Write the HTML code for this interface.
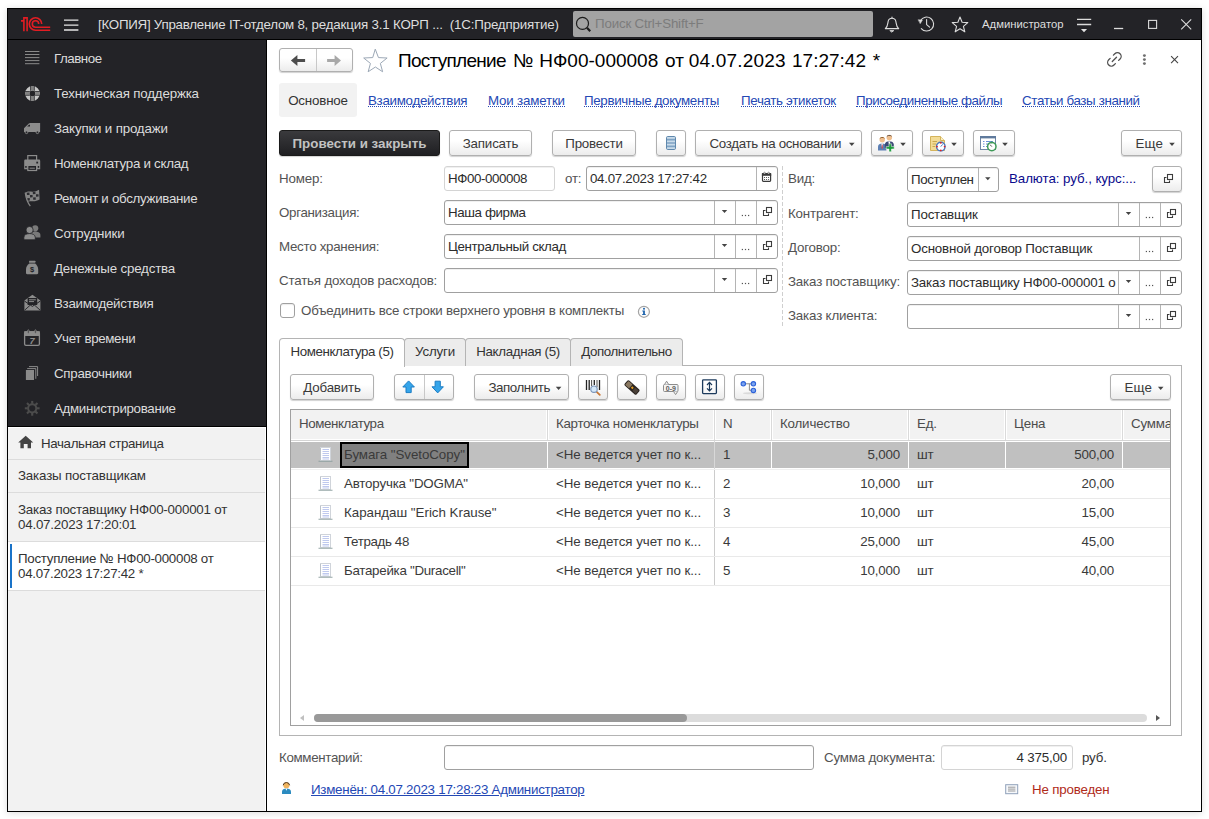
<!DOCTYPE html>
<html lang="ru">
<head>
<meta charset="utf-8">
<title>Поступление № НФ00-000008</title>
<style>
*{box-sizing:border-box;margin:0;padding:0}
html,body{width:1209px;height:819px;overflow:hidden;background:#fff}
body{font-family:"Liberation Sans",Arial,sans-serif;font-size:13.33px;letter-spacing:-.18px;color:#333;position:relative}
.abs{position:absolute}
#win{position:absolute;left:7px;top:8px;width:1195px;height:804px;border:1px solid #000;background:#fff;box-shadow:0 1px 7px rgba(0,0,0,.14)}
/* coordinates inside #win are page coords via #c wrapper */
#c{position:absolute;left:-8px;top:-9px;width:1209px;height:819px}
#tbar{position:absolute;left:8px;top:9px;width:1193px;height:31px;background:#232327;border-bottom:1px solid #000}
#tbar .t{position:absolute;top:0;line-height:31px;color:#dedede;white-space:nowrap;font-size:13.33px}
#search{position:absolute;left:573px;top:11px;width:300px;height:26px;background:#a3a3a3;border-radius:2px}
#search span{position:absolute;left:22px;top:0;line-height:26px;color:#7c7c7c;font-size:13.33px}
#side{position:absolute;left:8px;top:40px;width:259px;height:386px;background:#232327}
#side .i{position:absolute;left:46px;color:#dcdcdc;font-size:13.33px;line-height:16px;white-space:nowrap}
#open{position:absolute;left:8px;top:426px;width:259px;height:385px;background:#f2f2f2}
#open .r{position:absolute;left:0;width:259px;border-bottom:1px solid #dcdcdc;color:#333;padding-left:10px;line-height:15px}
.lbl{position:absolute;color:#535353;white-space:nowrap;line-height:16px}
.fld{position:absolute;height:25px;border:1px solid #a0a0a0;border-radius:3px;background:#fff;color:#2c2c2c;line-height:23px;padding-left:3px;white-space:nowrap;overflow:hidden;box-shadow:inset 0 1px 0 rgba(0,0,0,.06)}
.fld i{position:absolute;top:0;bottom:0;width:1px;background:#b4b4b4}
.btn{position:absolute;height:26px;border:1px solid #b0b0b0;border-radius:3px;background:linear-gradient(#fff 40%,#ececec);color:#3a3a3a;text-align:center;line-height:26px;white-space:nowrap;box-shadow:0 1px 1px rgba(0,0,0,.18)}
.lnk{position:absolute;color:#2448b4;white-space:nowrap;line-height:16px;border-bottom:1px dotted #2448b4;height:14px;margin-top:1px}
.btn.c{text-align:left;padding-left:13.5px}
.car{display:inline-block;width:0;height:0;border-left:2.8px solid transparent;border-right:2.8px solid transparent;border-top:3px solid #444;vertical-align:middle;margin-left:7px;position:relative;top:-1px}
.tab{position:absolute;top:338px;height:28px;border:1px solid #b4b4b4;border-bottom:none;background:#ececec;border-radius:4px 4px 0 0;line-height:25px;text-align:center;color:#333}
.th{position:absolute;height:29px;background:#f2f2f2;line-height:28px;color:#4c4c4c;white-space:nowrap;overflow:hidden}
.td{position:absolute;height:28px;line-height:28px;white-space:nowrap;color:#3a3a3a}
</style>
</head>
<body>
<div id="win"><div id="c">

<div id="tbar">
<svg class="abs" style="left:13px;top:8px" width="31" height="15" viewBox="0 0 31 15"><g fill="none" stroke="#e21d23" stroke-width="1.6"><path d="M2.9 14.2V.9H6.1V14.2M0 3.9H2.9"/><path d="M20.7 7A6.2 6.2 0 1 0 14.5 13.2H29.2"/><path d="M17.7 7A3.2 3.2 0 1 0 14.5 10.2H29.2"/></g></svg>
<svg class="abs" style="left:56px;top:10px" width="15" height="12" viewBox="0 0 15 12"><path d="M0 1.1H14.4M0 6.1H14.4M0 11H14.4" stroke="#e6e6e6" stroke-width="1.3"/></svg>
<span class="t" style="left:90px"><span style="letter-spacing:-0.25px">[КОПИЯ] Управление IT-отделом 8, </span>редакция 3.1 КОРП ...&nbsp;&nbsp;(1С:Предприятие)</span>
<span class="t" style="left:974px;font-size:11.3px;letter-spacing:0">Администратор</span>
</div>
<div id="search"><span>Поиск Ctrl+Shift+F</span></div>
<div id="side">
<span class="i" style="top:11px;letter-spacing:-0.48px">Главное</span>
<span class="i" style="top:46px">Техническая поддержка</span>
<span class="i" style="top:81px">Закупки и продажи</span>
<span class="i" style="top:116px;letter-spacing:-0.28px">Номенклатура и склад</span>
<span class="i" style="top:151px;letter-spacing:-0.30px">Ремонт и обслуживание</span>
<span class="i" style="top:186px">Сотрудники</span>
<span class="i" style="top:221px">Денежные средства</span>
<span class="i" style="top:256px;letter-spacing:-0.28px">Взаимодействия</span>
<span class="i" style="top:291px;letter-spacing:-0.35px">Учет времени</span>
<span class="i" style="top:326px;letter-spacing:-0.28px">Справочники</span>
<span class="i" style="top:361px;letter-spacing:-0.32px">Администрирование</span>
</div>
<div id="open">
<div class="r" style="top:0;height:34px;line-height:35px;padding-left:33px;letter-spacing:-0.36px">Начальная страница</div>
<div class="r" style="top:34px;height:33px;line-height:32px">Заказы поставщикам</div>
<div class="r" style="top:67px;height:49px;padding-top:9px;letter-spacing:-0.21px">Заказ поставщику НФ00-000001 от<br>04.07.2023 17:20:01</div>
<div class="r" style="top:116px;height:49px;padding-top:9px;background:#fff;letter-spacing:-0.28px">Поступление № НФ00-000008 от<br>04.07.2023 17:27:42 *<b class="abs" style="left:2px;top:2px;width:2px;height:44px;background:#1a73c8"></b></div>
</div>

<div class="abs" style="left:8px;top:426px;width:259px;height:1px;background:#000"></div>
<div class="abs" style="left:8px;top:427px;width:258px;height:1px;background:#fff"></div>
<div class="abs" style="left:265px;top:427px;width:1px;height:384px;background:#fff"></div>
<div class="abs" style="left:266px;top:40px;width:1px;height:771px;background:#000"></div>
<!-- header -->
<div class="btn" style="left:279px;top:48px;width:74px;height:24px"></div>
<div class="abs" style="left:316px;top:49px;width:1px;height:22px;background:#c8c8c8"></div>
<div class="abs" id="title" style="letter-spacing:0;left:0;top:49px;font-size:19px;line-height:24px;color:#000;white-space:nowrap"><span class="abs" style="left:398px;letter-spacing:-.72px">Поступление</span><span class="abs" style="left:513px">№</span><span class="abs" style="left:539.2px">НФ00-000008</span><span class="abs" style="left:665px">от</span><span class="abs" style="left:688.8px;letter-spacing:.18px">04.07.2023</span><span class="abs" style="left:792px">17:27:42</span><span class="abs" style="left:872.8px">*</span></div>

<div class="abs" style="left:279px;top:83px;width:78px;height:34px;background:#f2f2f2;border-radius:3px;line-height:36px;text-align:center;color:#333">Основное</div>
<span class="lnk" style="left:368px;top:92px;letter-spacing:-0.29px">Взаимодействия</span>
<span class="lnk" style="left:488px;top:92px">Мои заметки</span>
<span class="lnk" style="left:584px;top:92px;letter-spacing:-0.33px">Первичные документы</span>
<span class="lnk" style="left:741px;top:92px;letter-spacing:-0.32px">Печать этикеток</span>
<span class="lnk" style="left:856px;top:92px;letter-spacing:-0.41px">Присоединенные файлы</span>
<span class="lnk" style="left:1022px;top:92px;letter-spacing:-0.35px">Статьи базы знаний</span>

<!-- toolbar -->
<div class="btn" style="left:279px;top:130px;width:161px;background:linear-gradient(#3a3a3d,#1f1f22);border-color:#1a1a1a;color:#c2c2c2;font-weight:bold;font-size:13.33px;letter-spacing:0.02px">Провести и закрыть</div>
<div class="btn" style="left:449px;top:130px;width:83px">Записать</div>
<div class="btn" style="left:552px;top:130px;width:84px">Провести</div>
<div class="btn" style="left:656px;top:130px;width:30px"></div>
<div class="btn c" style="left:695px;top:130px;width:167px;letter-spacing:-0.33px">Создать на основании</div>
<div class="btn" style="left:871px;top:130px;width:42px"></div>
<div class="btn" style="left:922px;top:130px;width:42px"></div>
<div class="btn" style="left:973px;top:130px;width:42px"></div>
<div class="btn c" style="left:1121px;top:130px;width:61px;letter-spacing:0.12px">Еще</div>

<!-- form left -->
<span class="lbl" style="left:279px;top:171px">Номер:</span>
<div class="fld" style="left:444px;top:166px;width:111px;border-color:#d4d4d4;letter-spacing:-0.40px">НФ00-000008</div>
<span class="lbl" style="left:565px;top:171px">от:</span>
<div class="fld" style="left:586px;top:166px;width:192px;letter-spacing:-0.29px">04.07.2023 17:27:42<i style="left:169px"></i></div>
<span class="lbl" style="left:279px;top:205px;letter-spacing:-0.30px">Организация:</span>
<div class="fld" style="left:444px;top:200px;width:334px;letter-spacing:-0.38px">Наша фирма<i style="left:269px"></i><i style="left:290px"></i><i style="left:311px"></i></div>
<span class="lbl" style="left:279px;top:239px;letter-spacing:-0.28px">Место хранения:</span>
<div class="fld" style="left:444px;top:234px;width:334px;letter-spacing:-0.35px">Центральный склад<i style="left:269px"></i><i style="left:290px"></i><i style="left:311px"></i></div>
<span class="lbl" style="left:279px;top:273px">Статья доходов расходов:</span>
<div class="fld" style="left:444px;top:268px;width:334px"><i style="left:269px"></i><i style="left:290px"></i><i style="left:311px"></i></div>
<div class="abs" style="left:280px;top:303px;width:15px;height:15px;border:1px solid #a0a0a0;border-radius:3px;background:#fff;box-shadow:inset 0 1px 1px rgba(0,0,0,.08)"></div>
<span class="lbl" style="left:301px;top:303px">Объединить все строки верхнего уровня в комплекты</span>
<div class="abs" style="left:782px;top:166px;width:1px;height:162px;background:repeating-linear-gradient(to bottom,#cfcfcf 0,#cfcfcf 4px,transparent 4px,transparent 6px)"></div>

<!-- form right -->
<span class="lbl" style="left:788px;top:171px">Вид:</span>
<div class="fld" style="left:907px;top:167px;width:92px;letter-spacing:-0.42px">Поступлен<i style="left:70px"></i></div>
<span class="abs" style="left:1009px;top:171px;line-height:16px;color:#0a0a8c;white-space:nowrap;letter-spacing:-0.07px">Валюта: руб., курс:...</span>
<div class="btn" style="left:1152px;top:166px;width:30px"></div>
<span class="lbl" style="left:788px;top:206px">Контрагент:</span>
<div class="fld" style="left:907px;top:202px;width:275px">Поставщик<i style="left:210px"></i><i style="left:231px"></i><i style="left:252px"></i></div>
<span class="lbl" style="left:788px;top:240px">Договор:</span>
<div class="fld" style="left:907px;top:236px;width:275px">Основной договор Поставщик<i style="left:231px"></i><i style="left:252px"></i></div>
<span class="lbl" style="left:788px;top:274px">Заказ поставщику:</span>
<div class="fld" style="left:907px;top:270px;width:275px">Заказ поставщику НФ00-000001 о<i style="left:210px"></i><i style="left:231px"></i><i style="left:252px"></i></div>
<span class="lbl" style="left:788px;top:308px">Заказ клиента:</span>
<div class="fld" style="left:907px;top:304px;width:275px"><i style="left:210px"></i><i style="left:231px"></i><i style="left:252px"></i></div>

<!-- tabs -->
<div class="abs" style="left:279px;top:365px;width:903px;height:371px;border:1px solid #b4b4b4;background:#fff"></div>
<div class="tab" style="left:279px;width:126px;background:#fff;height:29px;letter-spacing:-0.41px">Номенклатура (5)</div>
<div class="tab" style="left:404px;width:62px">Услуги</div>
<div class="tab" style="left:465px;width:106px;letter-spacing:-0.33px">Накладная (5)</div>
<div class="tab" style="left:570px;width:113px;letter-spacing:-0.42px">Дополнительно</div>

<div class="btn" style="left:290px;top:374px;width:84px">Добавить</div>
<div class="btn" style="left:394px;top:374px;width:60px"></div>
<div class="abs" style="left:424px;top:375px;width:1px;height:24px;background:#c8c8c8"></div>
<div class="btn c" style="left:474px;top:374px;width:95px;letter-spacing:-0.45px">Заполнить</div>
<div class="btn" style="left:578px;top:374px;width:30px"></div>
<div class="btn" style="left:617px;top:374px;width:30px"></div>
<div class="btn" style="left:656px;top:374px;width:30px"></div>
<div class="btn" style="left:695px;top:374px;width:30px"></div>
<div class="btn" style="left:734px;top:374px;width:30px"></div>
<div class="btn c" style="left:1110px;top:374px;width:61px;letter-spacing:0.12px">Еще</div>

<!-- table -->
<div class="abs" id="tbl" style="left:290px;top:409px;width:881px;height:317px;border:1px solid #a0a0a0;background:#fff;overflow:hidden">
<div class="th" style="left:0px;top:0;width:255px;height:29px;padding-left:8px;letter-spacing:-0.40px">Номенклатура</div>
<div class="th" style="left:258px;top:0;width:164px;height:29px;padding-left:7px;letter-spacing:-0.30px">Карточка номенклатуры</div>
<div class="th" style="left:425px;top:0;width:54px;height:29px;padding-left:7px">N</div>
<div class="th" style="left:482px;top:0;width:134px;height:29px;padding-left:7px">Количество</div>
<div class="th" style="left:619px;top:0;width:94px;height:29px;padding-left:7px">Ед.</div>
<div class="th" style="left:716px;top:0;width:114px;height:29px;padding-left:7px">Цена</div>
<div class="th" style="left:833px;top:0;width:47px;height:29px;padding-left:7px">Сумма</div>
<div class="abs" style="left:256px;top:0;width:1px;height:30px;background:#dadada"></div>
<div class="abs" style="left:423px;top:0;width:1px;height:30px;background:#dadada"></div>
<div class="abs" style="left:480px;top:0;width:1px;height:30px;background:#dadada"></div>
<div class="abs" style="left:617px;top:0;width:1px;height:30px;background:#dadada"></div>
<div class="abs" style="left:714px;top:0;width:1px;height:30px;background:#dadada"></div>
<div class="abs" style="left:831px;top:0;width:1px;height:30px;background:#dadada"></div>
<div class="abs" style="left:0;top:30px;width:880px;height:1px;background:#d4d4d4"></div>
<div class="abs" style="left:0;top:32px;width:880px;height:26px;background:#c0c0c0"></div>
<div class="abs" style="left:256px;top:31px;width:1px;height:28px;background:#fff"></div>
<div class="abs" style="left:423px;top:31px;width:1px;height:28px;background:#fff"></div>
<div class="abs" style="left:480px;top:31px;width:1px;height:28px;background:#fff"></div>
<div class="abs" style="left:617px;top:31px;width:1px;height:28px;background:#fff"></div>
<div class="abs" style="left:714px;top:31px;width:1px;height:28px;background:#fff"></div>
<div class="abs" style="left:831px;top:31px;width:1px;height:28px;background:#fff"></div>
<div class="abs" style="left:49px;top:32px;width:129px;height:26px;background:#808080;border:2px solid #000"></div>
<div class="abs" style="left:423px;top:31px;width:1px;height:28px;background:#d8d8d8"></div><div class="abs" style="left:423px;top:59px;width:1px;height:117px;background:#cccccc"></div>
<div class="abs" style="left:0;top:59px;width:880px;height:1px;background:#f0f0f0"></div>
<svg class="abs" style="left:27px;top:37px" width="15" height="16" viewBox="0 0 15 16"><rect x="2.5" y="0.5" width="10" height="13" fill="#fff" stroke="#d0d4da"/><path d="M4.5 2.5H11M4.5 4.5H11M4.5 6.5H11M4.5 8.5H11M4.5 10.5H11M4.5 12H11" stroke="#bfc9ee" stroke-width="1"/><path d="M2.5 1.5V13" stroke="#a8b0b8" stroke-width="1" stroke-dasharray="1 1"/><path d="M0.5 14.3H14.5" stroke="#8a9c9c" stroke-width="1.2" opacity=".75"/></svg>
<div class="td" style="left:53px;top:31px;letter-spacing:-0.06px">Бумага "SvetoCopy"</div>
<div class="td" style="left:265px;top:31px;letter-spacing:-0.06px">&lt;Не ведется учет по к...</div>
<div class="td" style="left:432px;top:31px">1</div>
<div class="td" style="left:481px;top:31px;width:128px;text-align:right">5,000</div>
<div class="td" style="left:626px;top:31px">шт</div>
<div class="td" style="left:715px;top:31px;width:108px;text-align:right">500,00</div>
<div class="abs" style="left:0;top:88px;width:880px;height:1px;background:#e9e9e9"></div>
<svg class="abs" style="left:27px;top:66px" width="15" height="16" viewBox="0 0 15 16"><rect x="2.5" y="0.5" width="10" height="13" fill="#fff" stroke="#d0d4da"/><path d="M4.5 2.5H11M4.5 4.5H11M4.5 6.5H11M4.5 8.5H11M4.5 10.5H11M4.5 12H11" stroke="#bfc9ee" stroke-width="1"/><path d="M2.5 1.5V13" stroke="#a8b0b8" stroke-width="1" stroke-dasharray="1 1"/><path d="M0.5 14.3H14.5" stroke="#8a9c9c" stroke-width="1.2" opacity=".75"/></svg>
<div class="td" style="left:53px;top:60px">Авторучка "DOGMA"</div>
<div class="td" style="left:265px;top:60px;letter-spacing:-0.06px">&lt;Не ведется учет по к...</div>
<div class="td" style="left:432px;top:60px">2</div>
<div class="td" style="left:481px;top:60px;width:128px;text-align:right">10,000</div>
<div class="td" style="left:626px;top:60px">шт</div>
<div class="td" style="left:715px;top:60px;width:108px;text-align:right">20,00</div>
<div class="abs" style="left:0;top:117px;width:880px;height:1px;background:#e9e9e9"></div>
<svg class="abs" style="left:27px;top:95px" width="15" height="16" viewBox="0 0 15 16"><rect x="2.5" y="0.5" width="10" height="13" fill="#fff" stroke="#d0d4da"/><path d="M4.5 2.5H11M4.5 4.5H11M4.5 6.5H11M4.5 8.5H11M4.5 10.5H11M4.5 12H11" stroke="#bfc9ee" stroke-width="1"/><path d="M2.5 1.5V13" stroke="#a8b0b8" stroke-width="1" stroke-dasharray="1 1"/><path d="M0.5 14.3H14.5" stroke="#8a9c9c" stroke-width="1.2" opacity=".75"/></svg>
<div class="td" style="left:53px;top:89px;letter-spacing:-0.01px">Карандаш "Erich Krause"</div>
<div class="td" style="left:265px;top:89px;letter-spacing:-0.06px">&lt;Не ведется учет по к...</div>
<div class="td" style="left:432px;top:89px">3</div>
<div class="td" style="left:481px;top:89px;width:128px;text-align:right">10,000</div>
<div class="td" style="left:626px;top:89px">шт</div>
<div class="td" style="left:715px;top:89px;width:108px;text-align:right">15,00</div>
<div class="abs" style="left:0;top:146px;width:880px;height:1px;background:#e9e9e9"></div>
<svg class="abs" style="left:27px;top:124px" width="15" height="16" viewBox="0 0 15 16"><rect x="2.5" y="0.5" width="10" height="13" fill="#fff" stroke="#d0d4da"/><path d="M4.5 2.5H11M4.5 4.5H11M4.5 6.5H11M4.5 8.5H11M4.5 10.5H11M4.5 12H11" stroke="#bfc9ee" stroke-width="1"/><path d="M2.5 1.5V13" stroke="#a8b0b8" stroke-width="1" stroke-dasharray="1 1"/><path d="M0.5 14.3H14.5" stroke="#8a9c9c" stroke-width="1.2" opacity=".75"/></svg>
<div class="td" style="left:53px;top:118px;letter-spacing:-0.36px">Тетрадь 48</div>
<div class="td" style="left:265px;top:118px;letter-spacing:-0.06px">&lt;Не ведется учет по к...</div>
<div class="td" style="left:432px;top:118px">4</div>
<div class="td" style="left:481px;top:118px;width:128px;text-align:right">25,000</div>
<div class="td" style="left:626px;top:118px">шт</div>
<div class="td" style="left:715px;top:118px;width:108px;text-align:right">45,00</div>
<div class="abs" style="left:0;top:175px;width:880px;height:1px;background:#e9e9e9"></div>
<svg class="abs" style="left:27px;top:153px" width="15" height="16" viewBox="0 0 15 16"><rect x="2.5" y="0.5" width="10" height="13" fill="#fff" stroke="#d0d4da"/><path d="M4.5 2.5H11M4.5 4.5H11M4.5 6.5H11M4.5 8.5H11M4.5 10.5H11M4.5 12H11" stroke="#bfc9ee" stroke-width="1"/><path d="M2.5 1.5V13" stroke="#a8b0b8" stroke-width="1" stroke-dasharray="1 1"/><path d="M0.5 14.3H14.5" stroke="#8a9c9c" stroke-width="1.2" opacity=".75"/></svg>
<div class="td" style="left:53px;top:147px;letter-spacing:-0.28px">Батарейка "Duracell"</div>
<div class="td" style="left:265px;top:147px;letter-spacing:-0.06px">&lt;Не ведется учет по к...</div>
<div class="td" style="left:432px;top:147px">5</div>
<div class="td" style="left:481px;top:147px;width:128px;text-align:right">10,000</div>
<div class="td" style="left:626px;top:147px">шт</div>
<div class="td" style="left:715px;top:147px;width:108px;text-align:right">40,00</div>
<div class="abs" style="left:23px;top:304px;width:833px;height:8px;border-radius:4px;background:#dcdcdc"></div>
<div class="abs" style="left:23px;top:304px;width:373px;height:8px;border-radius:4px;background:#999"></div>
<div class="abs" style="left:9px;top:305px;width:0;height:0;border-top:3px solid transparent;border-bottom:3px solid transparent;border-right:4px solid #c0c0c0"></div>
<div class="abs" style="left:865px;top:305px;width:0;height:0;border-top:3px solid transparent;border-bottom:3px solid transparent;border-left:4px solid #555"></div>
</div>

<!-- bottom -->
<span class="lbl" style="left:279px;top:750px;letter-spacing:-0.33px">Комментарий:</span>
<div class="fld" style="left:444px;top:745px;width:370px"></div>
<span class="lbl" style="left:824px;top:750px">Сумма документа:</span>
<div class="fld" style="left:941px;top:745px;width:132px;border-color:#d4d4d4;text-align:right;padding-right:5px">4 375,00</div>
<span class="abs" style="left:1082px;top:750px;line-height:16px;color:#333">руб.</span>
<span class="abs" style="left:311px;top:782px;line-height:16px;color:#2448b4;text-decoration:underline;white-space:nowrap;letter-spacing:-0.25px">Изменён: 04.07.2023 17:28:23 Администратор</span>
<span class="abs" style="left:1032px;top:782px;line-height:16px;color:#b02a1a;white-space:nowrap">Не проведен</span>

<svg id="ov" class="abs" style="left:0;top:0;pointer-events:none;letter-spacing:0" width="1209" height="819" viewBox="0 0 1209 819">
<!-- titlebar icons -->
<g fill="none" stroke="#dcdcdc" stroke-width="1.1" stroke-linejoin="round" stroke-linecap="round">
<circle cx="582.5" cy="23.4" r="6" stroke="#1c1c1c" stroke-width="1.2"/><path d="M587 27.8L590.2 31.2" stroke="#1c1c1c" stroke-width="2.2" stroke-linecap="butt"/>
<path d="M885.3 28.6C888 26.3 887.7 23.3 888.1 21.6C888.5 19.4 890 18.3 892 18.3C894 18.3 895.5 19.4 895.9 21.6C896.3 23.3 896 26.3 898.7 28.6Z"/><path d="M892 17V18.3"/><path d="M890.2 30.6H893.8L892 31.9Z" fill="#e2e2e2" stroke-width=".8"/>
<path d="M920.6 20.5A7 7 0 1 1 921.3 28.6"/><path d="M918.4 19.8L922.4 20.1L920.4 23.4Z" fill="#dcdcdc" stroke-width=".5"/><path d="M926.6 19.6V24.6L929.6 27.2"/>
<path d="M960.00 17.00L962.12 22.29L967.80 22.67L963.42 26.31L964.82 31.83L960.00 28.80L955.18 31.83L956.58 26.31L952.20 22.67L957.88 22.29Z"/>
<path d="M1077 19.4H1091.2M1077 24.5H1091.2" stroke-linecap="butt" stroke-width="1.3"/><path d="M1080.9 29H1087.1L1084 32.2Z" fill="#e2e2e2" stroke="none"/>
<path d="M1114 28.5H1123.2" stroke-linecap="butt" stroke-width="1.3"/>
<rect x="1148.6" y="20.4" width="8" height="8" stroke-linejoin="miter"/>
<path d="M1181.2 19.3L1191.2 29.3M1191.2 19.3L1181.2 29.3" stroke-linecap="butt"/>
</g>

<!-- toolbar icons -->
<g>
<rect x="666.5" y="136.5" width="9" height="13" rx="1.2" fill="#c9dbea" stroke="#5f88ad"/>
<path d="M667 139.6H675M667 143H675M667 146.4H675" stroke="#7fa3c4" stroke-width="1.6"/>
</g>
<g>
<!-- users -->
<circle cx="882.2" cy="139.8" r="2.7" fill="#f0c090"/><path d="M879.4 139.2A2.9 2.9 0 0 1 885 139.2C884 137.6 880.6 137.6 879.4 139.2Z" fill="#8a5a2a"/>
<path d="M878 150.5V146.6C878 144.6 880 143.4 882.2 143.4C884.4 143.4 886.4 144.6 886.4 146.6V150.5Z" fill="#5c7fb4"/><path d="M881.3 143.6L882.2 149L883.1 143.6Z" fill="#fff"/><path d="M881.9 144.5H882.5L882.8 148L882.2 149L881.6 148Z" fill="#c33"/>
<circle cx="889.3" cy="137.6" r="2.8" fill="#f0c090"/><path d="M886.4 137.2A3 3 0 0 1 892.2 137.2C891 135.2 887.6 135.2 886.4 137.2Z" fill="#3a3030"/>
<path d="M884.8 148V144.6C884.8 142.4 887 141.2 889.3 141.2C891.6 141.2 893.8 142.4 893.8 144.6V148Z" fill="#3c4a78"/><path d="M888.3 141.4L889.3 146.5L890.3 141.4Z" fill="#fff"/>
<path d="M886.2 146.6H889V143.8H891.4V146.6H894.2V149H891.4V151.8H889V149H886.2Z" fill="#1c9a3c" stroke="#fff" stroke-width=".5"/>
<path d="M900.2 142.8H905.8L903 145.9Z" fill="#444"/>
</g>
<g>
<!-- doc + clock -->
<path d="M930.5 136.5H940.5L944.5 140.5V150.5H930.5Z" fill="#f3dc96" stroke="#d4b45c"/><path d="M940.5 136.5V140.5H944.5" fill="#fbf0c4" stroke="#d4b45c"/>
<path d="M932.5 141.5H937M932.5 144H936M932.5 146.5H935" stroke="#c8a850" stroke-width="1"/>
<circle cx="940.8" cy="146.6" r="4.3" fill="#fff" stroke="#4a78c0" stroke-width="1.4"/>
<g fill="#e02020"><circle cx="940.8" cy="142.8" r=".9"/><circle cx="940.8" cy="150.4" r=".9"/><circle cx="937" cy="146.6" r=".9"/><circle cx="944.6" cy="146.6" r=".9"/></g>
<path d="M940.8 146.6L942.6 144.4" stroke="#4a78c0" stroke-width="1"/>
<path d="M951.2 142.8H956.8L954 145.9Z" fill="#444"/>
</g>
<g>
<!-- list + green clock -->
<rect x="980.5" y="136.5" width="15" height="13" fill="#fff" stroke="#6f86a6"/><rect x="980" y="136" width="16" height="2.4" fill="#5f7a9c"/>
<path d="M983 141.5H984.5M986 141.5H993M983 144H984.5M986 144H990M983 146.5H984.5M986 146.5H988" stroke="#6a8fd8" stroke-width="1"/>
<circle cx="991.8" cy="146.6" r="4.2" fill="#fff" stroke="#3f9a58" stroke-width="1.5"/><path d="M991.8 146.6L990 144.6" stroke="#555" stroke-width="1"/><path d="M991 141.2L993.2 142.4L991 143.4Z" fill="#3f9a58"/>
<path d="M1002.2 142.8H1007.8L1005 145.9Z" fill="#444"/>
</g>

<!-- tab toolbar icons -->
<g fill="#35a5ea" stroke="#1b7cc4" stroke-width="1" stroke-linejoin="round">
<path d="M408.6 380.9L414.4 387H411.2V392.6H406V387H402.8Z"/>
<path d="M437.7 392.9L443.4 386.8H440.3V381.2H435.1V386.8H432Z"/>
</g>
<g>
<path d="M586.5 380V390M589.2 380V390M594.3 380V385M599.5 380V390" stroke="#222" stroke-width="1.3"/><path d="M591.6 380V386M597 380V387" stroke="#222" stroke-width=".8"/>
<path d="M596.4 391.6L599.8 394.8" stroke="#c87838" stroke-width="1.8" stroke-linecap="round"/>
<circle cx="594" cy="389.2" r="3.2" fill="#d4e8fa" stroke="#7a94b8" stroke-width="1.1"/>
</g>
<g transform="translate(632 387.5) rotate(42)">
<rect x="-8" y="-3.4" width="16" height="6.8" rx="1.6" fill="#2a2420"/><rect x="-7" y="-2.6" width="5.4" height="5.2" rx=".8" fill="#8a7860"/><rect x="-0.6" y="-1" width="2" height="2" fill="#e8a020"/><rect x="2.5" y="-2.2" width="4.6" height="4.4" rx=".6" fill="#4a4038"/>
</g>
<g>
<rect x="663.5" y="384.5" width="14.5" height="7" rx="1" fill="#f4f4f4" stroke="#8c8c8c"/>
<path d="M664.5 384.5L666.6 381.2L668.7 384.5M673.5 391.5L675.6 394.6L677.7 391.5" fill="#f4f4f4" stroke="#8c8c8c" stroke-width="1" stroke-linejoin="round"/>
<text x="670.8" y="390.6" font-family="Liberation Sans, sans-serif" font-size="7" font-weight="bold" text-anchor="middle" fill="#606060">0-9</text>
</g>
<g fill="none" stroke="#1c3a5c" stroke-width="1.3">
<rect x="702.6" y="379.8" width="13.8" height="13.8" rx=".8"/>
<path d="M709.5 383V390.4M707 385L709.5 382.4L712 385M707 388.4L709.5 391L712 388.4" stroke-width="1.2"/>
</g>
<g>
<path d="M745 383.8H753.3M749.4 383.8V390.3H753.3" fill="none" stroke="#8c8c8c" stroke-width="1"/>
<ellipse cx="750" cy="393.2" rx="7" ry="1" fill="#000" opacity=".1"/>
<g fill="#7aa4f0" stroke="#2e62d8" stroke-width="1.1"><circle cx="743.3" cy="383.8" r="2.2"/><circle cx="753.4" cy="383.8" r="2.2"/><circle cx="753.4" cy="390.4" r="2.2"/></g>
</g>
<!-- field icons -->
<g>
<path d="M721.8 210.1H727.2L724.5 213.1Z" fill="#444"/><rect x="741.8" y="214.9" width="1.2" height="1.2" fill="#555"/><rect x="744.9" y="214.9" width="1.2" height="1.2" fill="#555"/><rect x="748.0" y="214.9" width="1.2" height="1.2" fill="#555"/><g fill="none" stroke="#3c3c3c" stroke-width="1.1"><rect x="766.5" y="207.5" width="5" height="5"/><path d="M765.5 210.5H763.5V215.5H768.5V213.5"/></g>
<path d="M721.8 244.1H727.2L724.5 247.1Z" fill="#444"/><rect x="741.8" y="248.9" width="1.2" height="1.2" fill="#555"/><rect x="744.9" y="248.9" width="1.2" height="1.2" fill="#555"/><rect x="748.0" y="248.9" width="1.2" height="1.2" fill="#555"/><g fill="none" stroke="#3c3c3c" stroke-width="1.1"><rect x="766.5" y="241.5" width="5" height="5"/><path d="M765.5 244.5H763.5V249.5H768.5V247.5"/></g>
<path d="M721.8 278.1H727.2L724.5 281.1Z" fill="#444"/><rect x="741.8" y="282.9" width="1.2" height="1.2" fill="#555"/><rect x="744.9" y="282.9" width="1.2" height="1.2" fill="#555"/><rect x="748.0" y="282.9" width="1.2" height="1.2" fill="#555"/><g fill="none" stroke="#3c3c3c" stroke-width="1.1"><rect x="766.5" y="275.5" width="5" height="5"/><path d="M765.5 278.5H763.5V283.5H768.5V281.5"/></g>
<path d="M1125.8 212.1H1131.2L1128.5 215.1Z" fill="#444"/><rect x="1145.8" y="216.9" width="1.2" height="1.2" fill="#555"/><rect x="1148.9" y="216.9" width="1.2" height="1.2" fill="#555"/><rect x="1152.0" y="216.9" width="1.2" height="1.2" fill="#555"/><g fill="none" stroke="#3c3c3c" stroke-width="1.1"><rect x="1170.5" y="209.5" width="5" height="5"/><path d="M1169.5 212.5H1167.5V217.5H1172.5V215.5"/></g>
<rect x="1145.8" y="250.9" width="1.2" height="1.2" fill="#555"/><rect x="1148.9" y="250.9" width="1.2" height="1.2" fill="#555"/><rect x="1152.0" y="250.9" width="1.2" height="1.2" fill="#555"/><g fill="none" stroke="#3c3c3c" stroke-width="1.1"><rect x="1170.5" y="243.5" width="5" height="5"/><path d="M1169.5 246.5H1167.5V251.5H1172.5V249.5"/></g>
<path d="M1125.8 280.1H1131.2L1128.5 283.1Z" fill="#444"/><rect x="1145.8" y="284.9" width="1.2" height="1.2" fill="#555"/><rect x="1148.9" y="284.9" width="1.2" height="1.2" fill="#555"/><rect x="1152.0" y="284.9" width="1.2" height="1.2" fill="#555"/><g fill="none" stroke="#3c3c3c" stroke-width="1.1"><rect x="1170.5" y="277.5" width="5" height="5"/><path d="M1169.5 280.5H1167.5V285.5H1172.5V283.5"/></g>
<path d="M1125.8 314.1H1131.2L1128.5 317.1Z" fill="#444"/><rect x="1145.8" y="318.9" width="1.2" height="1.2" fill="#555"/><rect x="1148.9" y="318.9" width="1.2" height="1.2" fill="#555"/><rect x="1152.0" y="318.9" width="1.2" height="1.2" fill="#555"/><g fill="none" stroke="#3c3c3c" stroke-width="1.1"><rect x="1170.5" y="311.5" width="5" height="5"/><path d="M1169.5 314.5H1167.5V319.5H1172.5V317.5"/></g>
<path d="M985.1 177.2H990.5L987.8 180.2Z" fill="#444"/>
<g fill="none" stroke="#3c3c3c" stroke-width="1.1"><rect x="1167.5" y="174.5" width="5" height="5"/><path d="M1166.5 177.5H1164.5V182.5H1169.5V180.5"/></g>
<g><rect x="762.5" y="173.7" width="8.1" height="7.7" rx=".8" fill="#fff" stroke="#3a3a3a" stroke-width="1.2"/><rect x="761.9" y="173.1" width="9.3" height="2.7" fill="#3a3a3a"/><circle cx="764.5" cy="173.1" r=".9" fill="#fff" stroke="#3a3a3a" stroke-width=".5"/><circle cx="768.6" cy="173.1" r=".9" fill="#fff" stroke="#3a3a3a" stroke-width=".5"/><g fill="#3a3a3a"><circle cx="764.5" cy="177.5" r=".55"/><circle cx="766.55" cy="177.5" r=".55"/><circle cx="768.6" cy="177.5" r=".55"/><circle cx="764.5" cy="179.5" r=".55"/><circle cx="766.55" cy="179.5" r=".55"/><circle cx="768.6" cy="179.5" r=".55"/></g></g>
</g>
<!-- sidebar icons -->
<g fill="#8c8c8c" stroke="none">
<path d="M25 51.5H39.4M25 54.5H39.4M25 57.6H39.4M25 60.6H39.4M25 63.7H39.4" stroke="#8a8a8a" stroke-width="1" fill="none"/>
<circle cx="32.45" cy="93.4" r="5.2" fill="none" stroke="#c6c6c6" stroke-width="4.4"/>
<g fill="#828282"><rect x="30.950000000000003" y="86.0" width="3" height="4.4"/><rect x="30.950000000000003" y="96.4" width="3" height="4.4"/><rect x="25.050000000000004" y="91.9" width="4.4" height="3"/><rect x="35.45" y="91.9" width="4.4" height="3"/></g>
<path d="M30.55 86.00V90.80M30.55 96.00V100.80M25.05 91.50H29.85M35.05 91.50H39.85M34.35 86.00V90.80M34.35 96.00V100.80M25.05 95.30H29.85M35.05 95.30H39.85" stroke="#232327" stroke-width=".8" fill="none"/>
<path d="M24 132V128.2L28.8 123.6C29.2 123.3 29.6 123.1 30.2 123.1H40.1V132Z"/><path d="M27.2 126.6L29 124.8H30V126.6Z" fill="#232327"/><circle cx="26.5" cy="132.3" r="1.3" fill="#232327" stroke="#8c8c8c" stroke-width=".9"/><circle cx="37.4" cy="132.3" r="1.3" fill="#232327" stroke="#8c8c8c" stroke-width=".9"/>
<rect x="27.8" y="155.6" width="8.8" height="5" fill="none" stroke="#8c8c8c" stroke-width="1.2"/><path d="M24.2 160.9C24.2 160 24.8 159.5 25.6 159.5H38.8C39.6 159.5 40.2 160 40.2 160.9V169.2H24.2Z"/><rect x="36.3" y="161.7" width="1.8" height="1.8" fill="#232327"/><rect x="25.2" y="166" width="1.5" height="1.8" fill="#232327"/><rect x="37.7" y="166" width="1.5" height="1.8" fill="#232327"/><rect x="27.8" y="165.4" width="8.8" height="5.1" fill="#232327" stroke="#8c8c8c" stroke-width="1.2"/><path d="M29.6 168.2H34.8" stroke="#8c8c8c" stroke-width="1" fill="none"/>
<g transform="rotate(-3 32 196)"><path d="M25.4 192.4C28 190.6 30.6 191.6 32.6 191.8C35 192 37 191.4 39.4 190.2V200C37 201.2 35 201.6 32.6 201.4C30.6 201.2 28.6 200.6 27 201.6Z" fill="#858585"/><rect x="27.0" y="192.4" width="2.6" height="2.4" fill="#2c2c30"/><rect x="33.0" y="191.9" width="2.6" height="2.4" fill="#2c2c30"/><rect x="30.0" y="195.0" width="2.6" height="2.4" fill="#2c2c30"/><rect x="36.0" y="194.5" width="2.6" height="2.4" fill="#2c2c30"/><rect x="27.0" y="198.0" width="2.6" height="2.4" fill="#2c2c30"/><rect x="33.0" y="197.5" width="2.6" height="2.4" fill="#2c2c30"/><path d="M25.4 192.2C25.8 197 27 202 29.8 206" stroke="#858585" stroke-width="1.2" fill="none"/></g>
<circle cx="35.2" cy="228.3" r="3.1" fill="#7a7a7a"/><path d="M30.5 237.5V235C30.5 232.6 33 231.6 35.2 231.6C37.4 231.6 40.4 232.6 40.4 235V237.5Z" fill="#7a7a7a"/><circle cx="29.6" cy="230" r="3.6" stroke="#232327" stroke-width=".8"/><path d="M23.9 239.8V237.4C23.9 234.6 27 233.6 29.6 233.6C32.2 233.6 35.3 234.6 35.3 237.4V239.8Z" stroke="#232327" stroke-width=".8"/>
<rect x="29" y="260.8" width="6.4" height="1.9" rx=".4"/><path d="M29.2 263.5H35.2C37 265 38.2 267.2 38.2 269.4V273C38.2 273.7 37.7 274.2 37 274.2H27.2C26.5 274.2 26 273.7 26 273V269.4C26 267.2 27.2 265 29.2 263.5Z"/><text x="32.2" y="272.2" font-family="Liberation Sans, sans-serif" font-size="7.5" font-weight="bold" text-anchor="middle" fill="#232327">$</text>
<path d="M24.4 300.6L32.4 294.8L40.4 300.6V310.4H24.4Z"/><rect x="27.6" y="298" width="9.6" height="7" fill="#232327"/><path d="M29 299.8H35.8M29 301.6H34" stroke="#8c8c8c" stroke-width="1" /><path d="M24.4 301L32.4 306.4L40.4 301" fill="none" stroke="#232327" stroke-width="1"/><path d="M24.8 310L30.2 305.2M40 310L34.6 305.2" stroke="#232327" stroke-width=".9"/>
<rect x="24.6" y="331.8" width="14.8" height="13.5" rx="1.4" fill="none" stroke="#8c8c8c" stroke-width="1.3"/><rect x="24.2" y="331.2" width="15.6" height="4.8"/><rect x="27.7" y="329.8" width="1.3" height="3.4" rx=".6" fill="#232327" stroke="#8c8c8c" stroke-width=".8"/><rect x="34.8" y="329.8" width="1.3" height="3.4" rx=".6" fill="#232327" stroke="#8c8c8c" stroke-width=".8"/><text x="32" y="343.7" font-family="Liberation Sans, sans-serif" font-size="9.3" font-weight="bold" font-style="italic" text-anchor="middle" fill="#8c8c8c">7</text>
<rect x="25.9" y="370" width="8.1" height="10" fill="#8a8a8a"/><path d="M27.2 368.6H35.8V378.8M29 366.6H37.6V376" fill="none" stroke="#8a8a8a" stroke-width="1"/>
<g stroke="#4c4c4c" fill="none"><circle cx="32.2" cy="408.3" r="4.1" stroke-width="2"/><path d="M36.80 408.30L39.60 408.30" stroke-width="2.1"/><path d="M35.45 411.55L37.43 413.53" stroke-width="2.1"/><path d="M32.20 412.90L32.20 415.70" stroke-width="2.1"/><path d="M28.95 411.55L26.97 413.53" stroke-width="2.1"/><path d="M27.60 408.30L24.80 408.30" stroke-width="2.1"/><path d="M28.95 405.05L26.97 403.07" stroke-width="2.1"/><path d="M32.20 403.70L32.20 400.90" stroke-width="2.1"/><path d="M35.45 405.05L37.43 403.07" stroke-width="2.1"/></g>
<path d="M25.7 435.8L33.2 442.6H31V448.2H27.6V444H23.8V448.2H20.4V442.6H18.2Z" fill="#444"/>
</g>
<g stroke="none"><path d="M290.9 60.4L297.4 54.9V58.9H305.1V61.9H297.4V65.9Z" fill="#4d4d4d"/><path d="M341 60.4L334.6 54.9V58.9H327.1V61.9H334.6V65.9Z" fill="#a8a8a8"/></g>
<g><path d="M849.0 142.8H854.6L851.8 145.9Z" fill="#444"/><path d="M1169.2 142.8H1174.8L1172.0 145.9Z" fill="#444"/><path d="M555.8 386.8H561.4L558.6 389.9Z" fill="#444"/><path d="M1157.9 386.8H1163.5L1160.7 389.9Z" fill="#444"/></g>
<!-- misc icons -->
<g>
<circle cx="643.9" cy="311.8" r="5.5" fill="#fbfbfb" stroke="#a4a4a4" stroke-width="1.2"/>
<rect x="643.1" y="307.9" width="1.8" height="1.7" fill="#1f64ad"/><path d="M642.3 310.6H644.9V314H645.7V315H642.2V314H643.1V311.6H642.3Z" fill="#1f64ad"/>
<circle cx="286.4" cy="785.3" r="3.1" fill="#f0b45e"/><path d="M283.2 785.2A3.25 3.25 0 0 1 289.6 785.2" fill="none" stroke="#4a3420" stroke-width="1"/>
<path d="M282 794V791.6C282 789.6 284 788.6 286.4 788.6C288.8 788.6 291 789.6 291 791.6V794Z" fill="#2b8bc0"/><path d="M285.4 788.6L286.4 790.8L287.4 788.6Z" fill="#fff"/>
<rect x="1005.7" y="784.7" width="12" height="9" fill="#f6f8fb" stroke="#8fa1ba" stroke-width="1"/><path d="M1008 787.2H1015.4M1008 789.1H1015.4M1008 791H1015.4" stroke="#909090" stroke-width=".9"/>
</g>
<!-- doc header icons -->
<g fill="none" stroke="#5a5a5a" stroke-width="1.2" stroke-linecap="round">
<path d="M375.40 49.50L378.46 57.59L387.10 58.00L380.35 63.41L382.63 71.75L375.40 67.00L368.17 71.75L370.45 63.41L363.70 58.00L372.34 57.59Z" stroke="#9ca8b6" stroke-width="1" stroke-linejoin="miter"/>
<path d="M1171.1 56.2L1178 63.1M1178 56.2L1171.1 63.1" stroke-linecap="butt" stroke="#444" stroke-width="1.1"/>
<g transform="translate(1114.4 59.4) rotate(-45)" stroke-width="1.3" stroke="#505050"><path d="M2.3 -3.7H4.3A3.7 3.7 0 0 1 4.3 3.7H2.3M-2.3 -3.7H-4.3A3.7 3.7 0 0 0 -4.3 3.7H-2.3M-3 0H3"/></g>
</g>
<g fill="#707070"><circle cx="1144.4" cy="55.6" r="1.45"/><circle cx="1144.4" cy="59.6" r="1.45"/><circle cx="1144.4" cy="63.6" r="1.45"/></g>
</svg>

</div></div>
</body>
</html>
